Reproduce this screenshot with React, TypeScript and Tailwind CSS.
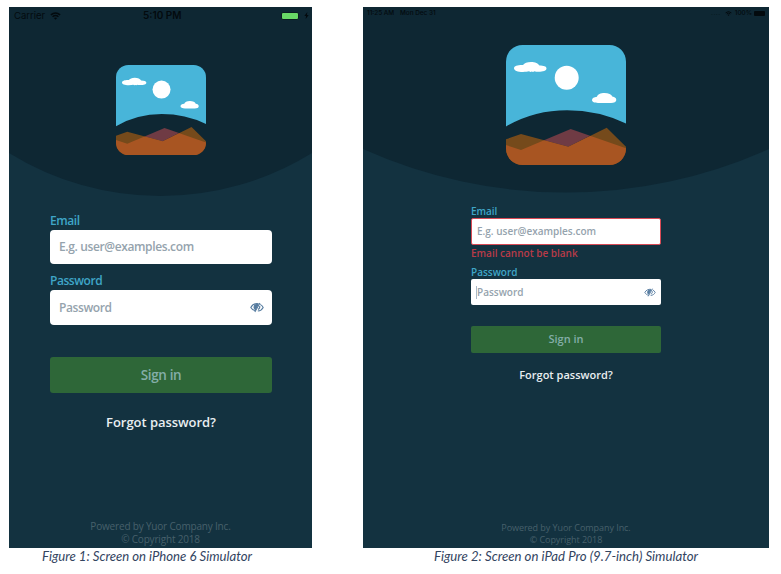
import { useId } from "react";
import type { ReactNode } from "react";

function Logo({ size }: { size: number }) {
  const id = useId();
  return (
    <svg width={size} height={size} viewBox="0 0 120 120" className="block">
      <defs>
        <clipPath id={id + "r"}>
          <rect width="120" height="120" rx="16.5" />
        </clipPath>
        <clipPath id={id + "m"}>
          <path d="M0 100 15 105 64.7 84 120 103.3V120H0Z" />
        </clipPath>
      </defs>
      <g clipPath={`url(#${id}r)`}>
        <path d="M0 0H120V78.5Q92 65.3 61 65.3Q28 65.3 0 81.5Z" fill="#48b5d9" />
        <circle cx="60.7" cy="32.7" r="12" fill="#fff" />
        <path
          d="M8 23.2c0-2 4-3.3 9-3.1 1.500-2 4-3.200 8-3.200s7.500 1.500 8.500 3.700c4 0 7 .9 7 2.900 0 2.200-3.500 3.300-8 3.300-2 0-3-.2-4-.6l-1.500.9-1.200-.5-1.300.5-1.500-.8c-1.500.4-3.500.6-6 .6-5.500 0-9-1.400-9-3.700Z"
          fill="#fff"
        />
        <path
          d="M86 55c0-1.800 2-3 5-3.300.5-2 3.500-3.600 7.500-3.600s7 1.300 7.800 3.500c2.500.4 4 1.600 4 3.300 0 1.900-2.300 2.900-5.300 3H92c-3.500 0-6-1-6-2.900Z"
          fill="#fff"
        />
        <path d="M0 94.300 15 89 62.300 101.700 100.700 82.700 120 101.700V120H0Z" fill="#754a1b" />
        <path d="M38 95.200 64.700 84 84 90.800 62.300 101.700Z" fill="#6f3b44" />
        <path
          d="M0 94.300 15 89 62.300 101.700 100.700 82.700 120 101.700V120H0Z"
          fill="#a85522"
          clipPath={`url(#${id}m)`}
        />
      </g>
    </svg>
  );
}

function EyeOff({ className }: { className: string }) {
  return (
    <svg viewBox="0 0 26 20" fill="none" stroke="#557b9f" strokeWidth="2" className={className}>
      <path d="M15.500 3C9 2 4 5 1.500 10c2 3.500 5 5.500 8.500 6.200" />
      <path d="M19 4.200c2.500 1.200 4.500 3.300 5.500 5.800-2 4-5.500 6.200-10 6.600" />
      <path d="M9 5.500c-2.200 3-1.800 6.500 1 8.500L15 4Z" fill="#557b9f" />
      <path d="M18.500 1.500 9 18.500" />
      <path d="M18 7c.7 3-.5 5.300-3 6.700" />
    </svg>
  );
}

function Wifi({ className }: { className: string }) {
  return (
    <svg viewBox="0 0 12 9" fill="none" stroke="currentColor" strokeWidth="1.700" className={className}>
      <path d="M.8 3.300Q6-1.200 11.200 3.300M2.700 5.300Q6 2.500 9.300 5.300" />
      <path d="M4.200 6.800Q6 5.400 7.800 6.800L6 8.800Z" fill="currentColor" stroke="none" />
    </svg>
  );
}

function Screen({ width, arc, caption, captionClass, children }: {
  width: number;
  arc: string;
  caption: string;
  captionClass: string;
  children: ReactNode;
}) {
  return (
    <figure className="shrink-0" style={{ width }}>
      <div className="relative h-[541px] overflow-hidden bg-[#133240]">
        <svg width={width} height="190" className="absolute left-0 top-0">
          <path d={arc} fill="#0e2733" />
        </svg>
        <div className="relative flex h-full flex-col">{children}</div>
      </div>
      <figcaption
        className={
          "h-4 whitespace-nowrap font-['Lato','Liberation_Sans',sans-serif] italic leading-[17px] text-[#33445f] " +
          captionClass
        }
      >
        {caption}
      </figcaption>
    </figure>
  );
}

export default function App() {
  return (
    <main className="flex h-[574px] w-[781px] gap-[51px] overflow-hidden bg-white pl-[9px] pt-[7px] font-['Open_Sans','Noto_Sans',sans-serif]">
      <Screen
        width={303}
        arc="M0 0H303V146A288 288 0 0 1 0 146Z"
        caption="Figure 1: Screen on iPhone 6 Simulator"
        captionClass="pl-[33px] text-[13.15px]"
      >
        <div className="flex h-[17px] items-center pl-[5px] pr-[3px] font-['Inter',sans-serif] text-[10px] leading-[17px] text-[#030a0e]">
          <span className="w-[36px] text-[9.5px]">Carrier</span>
          <Wifi className="h-[8px] w-[11px]" />
          <span className="ml-[82px] font-semibold">5:10 PM</span>
          <span className="ml-auto h-[8px] w-[18px] rounded-[2px] border border-[#0a1c20] bg-[#68d866]" />
          <svg viewBox="0 0 5 8" className="ml-[5px] h-[7px] w-[5px]">
            <path d="M3.500 0 0 4.500H2L1.500 8 5 3.500H3Z" fill="#030a0e" />
          </svg>
        </div>
        <div className="ml-[107px] mt-[41px]">
          <Logo size={90} />
        </div>
        <div className="mx-[41px] mt-[58px] w-[222px]">
          <label className="block h-[17px] text-[12px] font-semibold leading-[15px] tracking-[-0.45px] text-[#3fa6c8]">
            Email
          </label>
          <div className="flex h-[34px] items-center rounded-[4px] bg-white px-[9px] text-[12px] font-semibold tracking-[-0.37px] text-[#95a3ad]">
            E.g. user@examples.com
          </div>
          <label className="mt-[8px] block h-[18px] text-[12px] font-semibold leading-[17px] tracking-[-0.45px] text-[#3fa6c8]">
            Password
          </label>
          <div className="flex h-[35px] items-center justify-between rounded-[4px] bg-white pl-[9px] pr-[8px] text-[12px] font-semibold tracking-[-0.4px] text-[#95a3ad]">
            Password
            <EyeOff className="h-[11px] w-[14px]" />
          </div>
          <button className="mt-[32px] block h-[36px] w-full rounded-[3px] bg-[#2e6738] text-[13.5px] font-semibold tracking-[-0.35px] text-[#84aea8]">
            Sign in
          </button>
          <a className="mt-[20px] block h-[20px] text-center text-[13px] font-semibold leading-[19px] tracking-[-0.05px] text-[#e9eef1]">
            Forgot password?
          </a>
        </div>
        <footer className="mb-[2px] mt-auto text-center text-[10px] leading-[13px] tracking-[-0.18px] text-[#47606b]">
          <p>Powered by Yuor Company Inc.</p>
          <p>© Copyright 2018</p>
        </footer>
      </Screen>

      <Screen
        width={406}
        arc="M0 0H406V142A495 495 0 0 1 0 142Z"
        caption="Figure 2: Screen on iPad Pro (9.7-inch) Simulator"
        captionClass="pl-[71px] text-[13.2px]"
      >
        <div className="flex h-[12px] items-center pl-[4px] pr-[4px] font-['Inter',sans-serif] text-[6.4px] font-medium leading-[12px] text-[#030a0e]">
          <span className="w-[33px]">11:25 AM</span>
          <span>Mon Dec 31</span>
          <span className="ml-auto tracking-[0.500px] text-[#071a20]">....</span>
          <Wifi className="ml-[4px] h-[5px] w-[7px]" />
          <span className="ml-[3px]">100%</span>
          <span className="ml-[2px] h-[5px] w-[11px] rounded-[1px] bg-[#030a0e]" />
        </div>
        <div className="ml-[143px] mt-[26px]">
          <Logo size={120} />
        </div>
        <div className="mx-[108px] mt-[39px] w-[190px]">
          <label className="block h-[14px] text-[10px] font-semibold leading-[14px] tracking-[-0.05px] text-[#3fa6c8]">
            Email
          </label>
          <div className="flex h-[27px] items-center rounded-[2px] border border-[#d84a55] bg-white px-[5px] text-[10px] font-semibold text-[#95a3ad]">
            E.g. user@examples.com
          </div>
          <p className="h-[17px] text-[10px] font-semibold leading-[17px] text-[#b83b48]">Email cannot be blank</p>
          <label className="mt-[3px] block h-[14px] text-[10px] font-semibold leading-[14px] text-[#3fa6c8]">Password</label>
          <div className="flex h-[26px] items-center rounded-[2px] bg-white px-[5px] text-[10px] font-semibold text-[#95a3ad]">
            <span className="h-[13px] w-px bg-[#a9bac8]" />
            Password
            <EyeOff className="ml-auto h-[9px] w-[12px]" />
          </div>
          <button className="mt-[21px] block h-[27px] w-full rounded-[2px] bg-[#2e6738] text-[11px] font-semibold text-[#84aea8]">
            Sign in
          </button>
          <a className="mt-[13px] block h-[18px] text-center text-[11px] font-semibold leading-[18px] text-[#e9eef1]">
            Forgot password?
          </a>
        </div>
        <footer className="mb-[2px] mt-auto text-center text-[9px] leading-[12px] tracking-[-0.05px] text-[#47606b]">
          <p>Powered by Yuor Company Inc.</p>
          <p>© Copyright 2018</p>
        </footer>
      </Screen>
    </main>
  );
}
